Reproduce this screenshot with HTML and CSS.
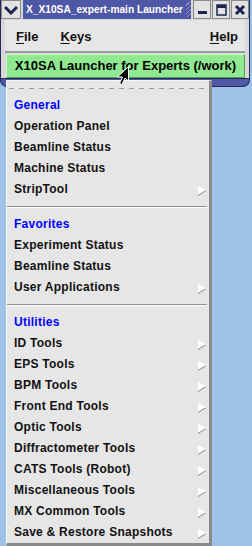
FILE: index.html
```html
<!DOCTYPE html>
<html>
<head lang="en">
    <meta charset="UTF-8">
    <title>X_X10SA_expert-main Launcher</title>
    <link rel="stylesheet" href="styles.css">
</head>
<body>
<div class="window">
    <div class="titlebar">
        <div class="tbtn menubtn">
            <svg width="14" height="10" viewBox="0 0 14 10"><path d="M1 2 L7 8 L13 2" fill="none" stroke="#1c2450" stroke-width="3"/></svg>
        </div>
        <div class="title"><span>X_X10SA_expert-main Launcher</span><i class="hatch"></i></div>
        <div class="tbtn">
            <svg width="11" height="11" viewBox="0 0 11 11"><rect x="1" y="7" width="9" height="3" fill="#1c2450"/></svg>
        </div>
        <div class="tbtn">
            <svg width="11" height="12" viewBox="0 0 11 12"><rect x="1" y="1" width="9" height="10" fill="none" stroke="#1c2450" stroke-width="1.5"/><rect x="1" y="1" width="9" height="3" fill="#1c2450"/></svg>
        </div>
        <div class="tbtn">
            <svg width="12" height="12" viewBox="0 0 12 12"><path d="M2 2 L10 10 M10 2 L2 10" stroke="#1c2450" stroke-width="3"/></svg>
        </div>
    </div>
    <div class="client">
        <div class="menubar">
            <span class="mb"><u>F</u>ile</span>
            <span class="mb"><u>K</u>eys</span>
            <span class="mb help"><u>H</u>elp</span>
        </div>
        <div class="launch">X10SA Launcher for Experts (/work)</div>
    </div>
</div>

<div class="menu">
    <div class="tearoff"><div class="dash"></div></div>
    <div class="item head">General</div>
    <div class="item">Operation Panel</div>
    <div class="item">Beamline Status</div>
    <div class="item">Machine Status</div>
    <div class="item sub">StripTool<i class="arrow"></i></div>
    <div class="sep"></div>
    <div class="item head">Favorites</div>
    <div class="item">Experiment Status</div>
    <div class="item">Beamline Status</div>
    <div class="item sub">User Applications<i class="arrow"></i></div>
    <div class="sep"></div>
    <div class="item head">Utilities</div>
    <div class="item sub">ID Tools<i class="arrow"></i></div>
    <div class="item sub">EPS Tools<i class="arrow"></i></div>
    <div class="item sub">BPM Tools<i class="arrow"></i></div>
    <div class="item sub">Front End Tools<i class="arrow"></i></div>
    <div class="item sub">Optic Tools<i class="arrow"></i></div>
    <div class="item sub">Diffractometer Tools<i class="arrow"></i></div>
    <div class="item sub">CATS Tools (Robot)<i class="arrow"></i></div>
    <div class="item sub">Miscellaneous Tools<i class="arrow"></i></div>
    <div class="item sub">MX Common Tools<i class="arrow"></i></div>
    <div class="item sub">Save &amp; Restore Snapshots<i class="arrow"></i></div>
</div>

<!-- mouse pointer over the launcher button -->
<svg class="cursor" width="13" height="20" viewBox="0 0 13 20">
    <path d="M11.5 0.5 L11.5 15 L8 12 L5 18.5 L2.5 17.5 L5.5 11 L0.5 11 Z" fill="#000" stroke="#fff" stroke-width="1"/>
</svg>
</body>
</html>
```

FILE: styles.css
```css
body{
    margin: 0;
    padding: 0;
    background: #9dc3e6;
    font-family: "Liberation Sans", Arial, sans-serif;
    position: relative;
    height: 546px;
    overflow: hidden;
}
.window{
    width: 250px;
    box-sizing: border-box;
    background: #4f58a6;
    border: 1px solid #262b5c;
    border-top: none;
    border-radius: 0 0 7px 7px;
    padding-bottom: 7px;
}
.titlebar{
    height: 19px;
    display: flex;
    gap: 1px;
    background: #d6d6d6;
}
.tbtn{
    width: 16px;
    height: 17px;
    background: #e2e2e2;
    border: 1px solid #8a8a8a;
    display: flex;
    align-items: center;
    justify-content: center;
}
.menubtn{
    width: 18px;
    margin-right: 1px;
}
.title{
    flex: 1;
    background: #4f58a6;
    color: #fff;
    font-weight: bold;
    font-size: 10.2px;
    line-height: 19px;
    padding-left: 3px;
    display: flex;
    overflow: hidden;
    white-space: nowrap;
    margin-right: 1px;
}
.hatch{
    flex: 1;
    margin: 2px 0 2px 3px;
    background: repeating-linear-gradient(135deg, #4f58a6 0 2px, #8d94c8 2px 3px);
}
.client{
    background: #d8d8d8;
    padding: 1px 4px 0 4px;
    border-bottom: 1px solid #262b5c;
}
.menubar{
    height: 31px;
    display: flex;
    align-items: center;
    background: #e6e6e6;
    border-bottom: 2px solid #9a9a9a;
    font-size: 13px;
    font-weight: bold;
    color: #111;
}
.mb{
    margin-left: 11px;
    margin-right: 11px;
    padding-top: 2px;
}
.mb u{
    text-decoration-thickness: 1px;
    text-underline-offset: 2px;
}
.help{
    margin-left: auto;
    margin-right: 7px;
}
.launch{
    margin: 1px 0 0 1px;
    height: 22px;
    background: #90e890;
    border-top: 1px solid #c8f7c8;
    border-left: 1px solid #c8f7c8;
    border-bottom: 1px solid #5a9a5a;
    border-right: 1px solid #5a9a5a;
    font-size: 13px;
    font-weight: bold;
    line-height: 22px;
    text-align: center;
    color: #000;
}
.menu{
    position: relative;
    margin: -7px 0 0 6px;
    width: 206px;
    box-sizing: border-box;
    background: #e6e6e6;
    border-top: 1px solid #f6f6f6;
    border-left: 1px solid #f6f6f6;
    border-right: 3px solid #8a8a8a;
    border-bottom: 3px solid #8a8a8a;
}
.tearoff{
    height: 14px;
    padding: 7px 3px 0 2px;
    box-sizing: border-box;
}
.dash{
    height: 1px;
    background: repeating-linear-gradient(90deg, #9a9a9a 0 5px, transparent 5px 10px);
}
.item{
    height: 21px;
    line-height: 21px;
    padding-left: 7px;
    font-size: 12px;
    font-weight: bold;
    letter-spacing: 0.25px;
    color: #111;
    display: flex;
    align-items: center;
    white-space: nowrap;
}
.head{
    color: #0000ff;
}
.arrow{
    margin-left: auto;
    margin-right: 3px;
    width: 0;
    height: 0;
    border-top: 4px solid transparent;
    border-bottom: 5px solid transparent;
    border-left: 8px solid #fff;
    position: relative;
    top: 1px;
    filter: drop-shadow(0 1px 0 #808080);
}
.sep{
    height: 14px;
    padding: 6px 2px 0 0;
    box-sizing: border-box;
}
.sep::before{
    content: "";
    display: block;
    height: 1px;
    background: #8e8e8e;
    border-bottom: 1px solid #fff;
}
.cursor{
    position: absolute;
    left: 117px;
    top: 66px;
}
```
